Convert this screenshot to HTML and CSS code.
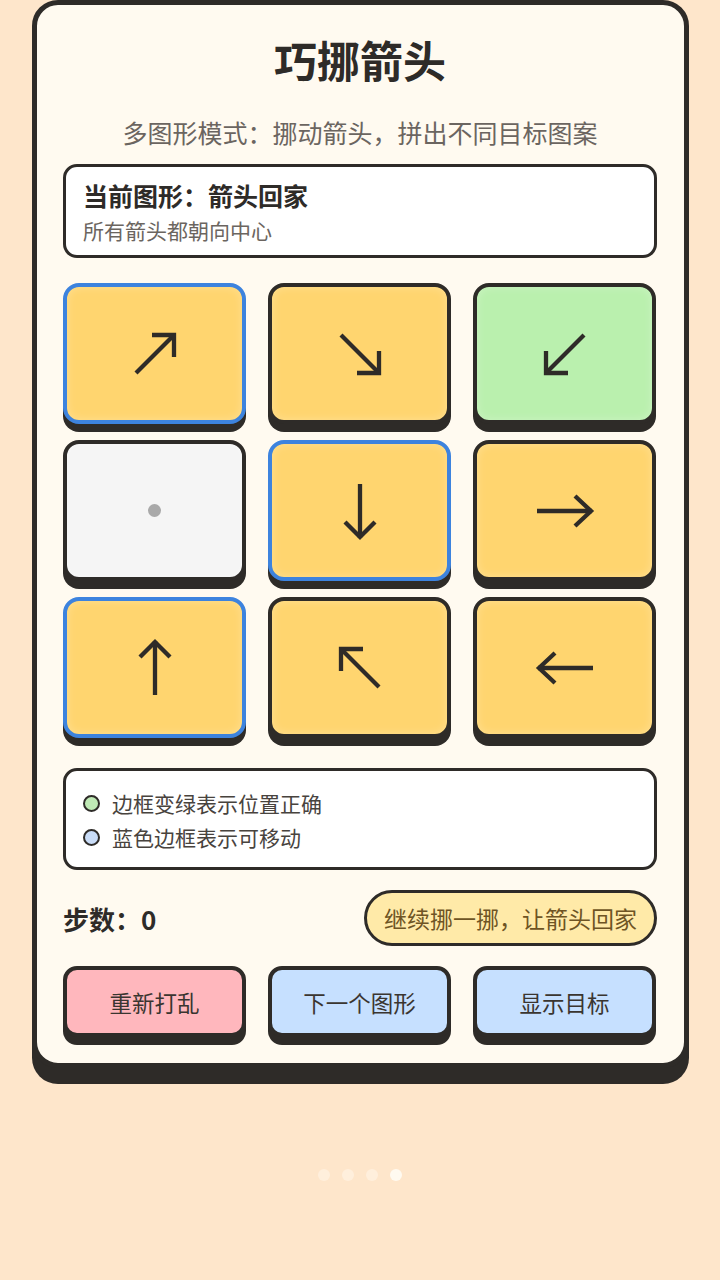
FILE: index.html
```html
<!DOCTYPE html>
<html lang="zh-CN">
<head>
<meta charset="utf-8">
<title>巧挪箭头</title>
<link rel="stylesheet" href="styles.css">
</head>
<body>
<div class="page">
  <main class="card">
    <h1 class="title">巧挪箭头</h1>
    <p class="subtitle">多图形模式：挪动箭头，拼出不同目标图案</p>

    <section class="info">
      <div class="info-title">当前图形：箭头回家</div>
      <div class="info-sub">所有箭头都朝向中心</div>
    </section>

    <section class="grid">
      <div class="tile yellow movable">
        <svg class="arrow" viewBox="0 0 60 60"><line x1="11" y1="49" x2="49" y2="11"/><polyline points="27,11 49,11 49,33"/></svg>
      </div>
      <div class="tile yellow">
        <svg class="arrow" viewBox="0 0 60 60"><line x1="11" y1="11" x2="49" y2="49"/><polyline points="49,27 49,49 27,49"/></svg>
      </div>
      <div class="tile green">
        <svg class="arrow" viewBox="0 0 60 60"><line x1="49" y1="11" x2="11" y2="49"/><polyline points="11,27 11,49 33,49"/></svg>
      </div>
      <div class="tile empty">
        <span class="dot"></span>
      </div>
      <div class="tile yellow movable">
        <svg class="arrow" viewBox="0 0 60 60"><line x1="30" y1="3" x2="30" y2="57"/><polyline points="15,41 30,56 45,41"/></svg>
      </div>
      <div class="tile yellow">
        <svg class="arrow" viewBox="0 0 60 60"><line x1="2" y1="30" x2="57" y2="30"/><polyline points="40,15 56,30 40,45"/></svg>
      </div>
      <div class="tile yellow movable">
        <svg class="arrow" viewBox="0 0 60 60"><line x1="30" y1="57" x2="30" y2="3"/><polyline points="15,19 30,4 45,19"/></svg>
      </div>
      <div class="tile yellow">
        <svg class="arrow" viewBox="0 0 60 60"><line x1="49" y1="49" x2="11" y2="11"/><polyline points="11,33 11,11 33,11"/></svg>
      </div>
      <div class="tile yellow">
        <svg class="arrow" viewBox="0 0 60 60"><line x1="58" y1="30" x2="3" y2="30"/><polyline points="20,15 4,30 20,45"/></svg>
      </div>
    </section>

    <section class="legend">
      <div class="legend-row"><span class="ldot ldot-green"></span>边框变绿表示位置正确</div>
      <div class="legend-row"><span class="ldot ldot-blue"></span>蓝色边框表示可移动</div>
    </section>

    <section class="status">
      <div class="steps">步数：0</div>
      <div class="pill">继续挪一挪，让箭头回家</div>
    </section>

    <section class="actions">
      <button class="btn btn-pink">重新打乱</button>
      <button class="btn btn-blue">下一个图形</button>
      <button class="btn btn-blue">显示目标</button>
    </section>
  </main>

  <div class="pager">
    <span class="pdot"></span>
    <span class="pdot"></span>
    <span class="pdot"></span>
    <span class="pdot active"></span>
  </div>
</div>
</body>
</html>
```

FILE: styles.css
```css
* {
  box-sizing: border-box;
}

html, body {
  margin: 0;
  padding: 0;
}

body {
  background: #fee6cb;
  font-family: "Noto Sans CJK SC", "Noto Sans", sans-serif;
  color: #2e2b28;
  width: 720px;
  height: 1280px;
  overflow: hidden;
}

.page {
  display: flex;
  flex-direction: column;
  align-items: center;
}

.card {
  width: 657px;
  margin-left: 1px;
  background: #fffaf0;
  border: 5px solid #2e2b28;
  border-radius: 26px;
  box-shadow: 0 16px 0 #2e2b28;
  padding: 29px 27px 26px 26px;
  display: flex;
  flex-direction: column;
}

.title {
  margin: 0;
  font-size: 43px;
  line-height: 50px;
  font-weight: 700;
  text-align: center;
  color: #2e2b28;
}

.subtitle {
  margin: 31px 0 0;
  font-size: 25px;
  line-height: 34px;
  text-align: center;
  color: #6b6560;
}

.info {
  margin-top: 15px;
  background: #ffffff;
  border: 3px solid #2e2b28;
  border-radius: 14px;
  padding: 12px 17px 11px;
}

.info-title {
  font-size: 25px;
  line-height: 32px;
  font-weight: 700;
  color: #2e2b28;
}

.info-sub {
  margin-top: 5px;
  font-size: 21px;
  line-height: 28px;
  color: #6b6560;
}

.grid {
  margin-top: 25px;
  display: grid;
  grid-template-columns: repeat(3, 183px);
  grid-auto-rows: 141px;
  column-gap: 22px;
  row-gap: 16px;
}

.tile {
  border: 4px solid #2e2b28;
  border-radius: 16px;
  box-shadow: 0 8px 0 #2e2b28, inset 0 0 10px rgba(255, 255, 255, 0.25);
  display: flex;
  align-items: center;
  justify-content: center;
}

.tile.yellow {
  background: #ffd56f;
}

.tile.green {
  background: #baf0ae;
}

.tile.empty {
  background: #f5f5f5;
}

.tile.movable {
  border-color: #3d83de;
}

.arrow {
  width: 60px;
  height: 60px;
  fill: none;
  stroke: #2e2b28;
  stroke-width: 4.3;
  stroke-linecap: butt;
  stroke-linejoin: miter;
}

.dot {
  width: 13px;
  height: 13px;
  border-radius: 50%;
  background: #a9a9a9;
}

.legend {
  margin-top: 30px;
  background: #ffffff;
  border: 3px solid #2e2b28;
  border-radius: 14px;
  padding: 15px 17px 13px;
}

.legend-row {
  display: flex;
  align-items: center;
  gap: 12px;
  font-size: 21px;
  line-height: 34px;
  color: #48433e;
}

.ldot {
  width: 17px;
  height: 17px;
  border-radius: 50%;
  border: 2px solid #2e2b28;
  flex: none;
}

.ldot-green {
  background: #bfe9b5;
}

.ldot-blue {
  background: #c9dcf7;
}

.status {
  margin-top: 20px;
  display: flex;
  align-items: center;
  justify-content: space-between;
}

.steps {
  font-size: 26px;
  font-weight: 700;
  color: #2e2b28;
}

.pill {
  height: 56px;
  display: flex;
  align-items: center;
  padding: 0 17px;
  background: #ffeaa8;
  border: 3px solid #2e2b28;
  border-radius: 28px;
  font-size: 23px;
  color: #6e5424;
  white-space: nowrap;
}

.actions {
  margin-top: 20px;
  display: grid;
  grid-template-columns: repeat(3, 183px);
  column-gap: 22px;
}

.btn {
  height: 71px;
  border: 4px solid #2e2b28;
  border-radius: 14px;
  box-shadow: 0 8px 0 #2e2b28;
  font-family: "Noto Sans CJK SC", "Noto Sans", sans-serif;
  font-size: 22.5px;
  color: #3a3530;
  padding: 0;
}

.btn-pink {
  background: #ffb7bd;
}

.btn-blue {
  background: #c6e0ff;
}

.pager {
  margin-top: 101px;
  display: flex;
  gap: 12px;
}

.pdot {
  width: 12px;
  height: 12px;
  border-radius: 50%;
  background: #ffefdc;
}

.pdot.active {
  background: #fffaf0;
}
```
